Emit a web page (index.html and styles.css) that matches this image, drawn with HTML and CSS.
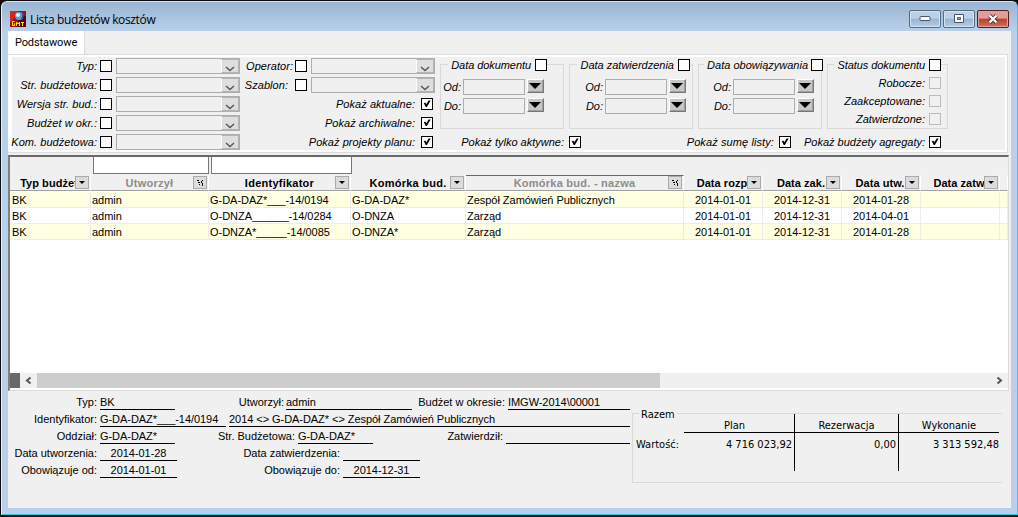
FILE: index.html
```html
<!DOCTYPE html>
<html lang="pl">
<head>
  <meta charset="UTF-8">
  <title>Lista budżetów kosztów</title>
  <link rel="stylesheet" href="styles.css">
</head>
<body>
  <svg class="defs" width="0" height="0">
    <symbol id="check" viewBox="0 0 12 12"><path d="M2.700 5 4.500 4.800 5.300 6.300 7.600 2.600 9.600 2.600 5.900 9 4.700 9Z"/></symbol>
    <symbol id="chevron" viewBox="0 0 10 6"><path d="M1 1 5 4.500 9 1" fill="none" stroke="#555" stroke-width="1.4"/></symbol>
    <symbol id="down" viewBox="0 0 12 6"><path d="M0 0h12L6 6z"/></symbol>
    <symbol id="small" viewBox="0 0 6 3"><path d="M0 0h6L3 3z"/></symbol>
    <symbol id="sort" viewBox="0 0 7 6"><path d="M0 0h2v1h-2zM1 2h2v1h-2zM2 4h1v1h-1zM5 0h1v1h-1zM4 1h1v2h-1zM5 3h1v3h-1z"/></symbol>
  </svg>

  <div class="window">
    <div class="titlebar">
      <svg class="logo" width="16" height="16" viewBox="0 0 16 16">
        <rect width="16" height="16" fill="#a80c0c"/>
        <path d="M0 0h8L2 11H0z" fill="#d32a20"/>
        <path d="M10 5h6v11H6z" fill="#5c0505"/>
        <circle cx="9" cy="5" r="4" fill="#5b9fd0"/>
        <circle cx="8" cy="4" r="2" fill="#d9f1fb"/>
        <path d="M12 1l2 2-1 5-2 1 1-4z" fill="#24588c"/>
        <path d="M4.500 10.500H2.500v4h2v-2M6.500 15v-4l1.500 2 1.500-2v4M11 11.500h3M12.500 11.500V15" fill="none" stroke="#ffe800"/>
      </svg>
      <h1>Lista budżetów kosztów</h1>
      <div class="controls">
        <button class="control"><svg width="12" height="6"><rect x="1" y=".5" width="10" height="4" rx="1" fill="#fff" stroke="#4a5468"/></svg></button>
        <button class="control"><svg width="12" height="10"><path d="M1.500.500h9v8h-9z" fill="#fff" stroke="#4a5468"/><path d="M4.500 3.500h3v2h-3z" fill="#9ab4d0" stroke="#4a5468"/></svg></button>
        <button class="control close"><svg width="12" height="10"><path d="M2.500 1.500l7 7M9.500 1.500l-7 7" stroke="#4a3848" stroke-width="4"/><path d="M2.500 1.500l7 7M9.500 1.500l-7 7" stroke="#fff" stroke-width="2.200"/></svg></button>
      </div>
    </div>

    <div class="content">
      <div class="tabs"><div class="tab">Podstawowe</div></div>

      <div class="filters">
        <div class="col-a">
          <div class="row"><label>Typ:</label><i class="cb"></i><div class="select"><span><svg><use href="#chevron"/></svg></span></div></div>
          <div class="row"><label>Str. budżetowa:</label><i class="cb"></i><div class="select"><span><svg><use href="#chevron"/></svg></span></div></div>
          <div class="row"><label>Wersja str. bud.:</label><i class="cb"></i><div class="select"><span><svg><use href="#chevron"/></svg></span></div></div>
          <div class="row"><label>Budżet w okr.:</label><i class="cb"></i><div class="select"><span><svg><use href="#chevron"/></svg></span></div></div>
          <div class="row"><label>Kom. budżetowa:</label><i class="cb"></i><div class="select"><span><svg><use href="#chevron"/></svg></span></div></div>
        </div>

        <div class="col-b">
          <div class="row"><label>Operator:</label><i class="cb"></i><div class="select"><span><svg><use href="#chevron"/></svg></span></div></div>
          <div class="row"><label class="szablon">Szablon:</label><i class="cb"></i><div class="select"><span><svg><use href="#chevron"/></svg></span></div></div>
          <div class="row check"><label>Pokaż aktualne:</label><i class="cb"><svg><use href="#check"/></svg></i></div>
          <div class="row check"><label>Pokaż archiwalne:</label><i class="cb"><svg><use href="#check"/></svg></i></div>
          <div class="row check"><label>Pokaż projekty planu:</label><i class="cb"><svg><use href="#check"/></svg></i></div>
        </div>

        <div class="col-c">
          <div class="groups">
            <div class="group dokument">
              <div class="legend"><label>Data dokumentu</label><i class="cb"></i></div>
              <div class="date"><label>Od:</label><span class="input"></span><button><svg><use href="#down"/></svg></button></div>
              <div class="date"><label>Do:</label><span class="input"></span><button><svg><use href="#down"/></svg></button></div>
            </div>
            <div class="group zatwierdzenie">
              <div class="legend"><label>Data zatwierdzenia</label><i class="cb"></i></div>
              <div class="date"><label>Od:</label><span class="input"></span><button><svg><use href="#down"/></svg></button></div>
              <div class="date"><label>Do:</label><span class="input"></span><button><svg><use href="#down"/></svg></button></div>
            </div>
            <div class="group obowiazywanie">
              <div class="legend"><label>Data obowiązywania</label><i class="cb"></i></div>
              <div class="date"><label>Od:</label><span class="input"></span><button><svg><use href="#down"/></svg></button></div>
              <div class="date"><label>Do:</label><span class="input"></span><button><svg><use href="#down"/></svg></button></div>
            </div>
            <div class="group status">
              <div class="legend"><label>Status dokumentu</label><i class="cb"></i></div>
              <div class="state"><label>Robocze:</label><i class="cb off"></i></div>
              <div class="state"><label>Zaakceptowane:</label><i class="cb off"></i></div>
              <div class="state"><label>Zatwierdzone:</label><i class="cb off"></i></div>
            </div>
          </div>
          <div class="options">
            <label class="aktywne">Pokaż tylko aktywne:</label><i class="cb"><svg><use href="#check"/></svg></i>
            <label class="suma">Pokaż sumę listy:</label><i class="cb"><svg><use href="#check"/></svg></i>
            <label class="agregaty">Pokaż budżety agregaty:</label><i class="cb"><svg><use href="#check"/></svg></i>
          </div>
        </div>
      </div>

      <div class="list">
        <div class="search"><span></span><span></span></div>
        <div class="tr head">
          <div><b class="cut">Typ budżet</b><i><svg><use href="#small"/></svg></i></div>
          <div class="dim"><b>Utworzył</b><i><svg class="sort"><use href="#sort"/></svg></i></div>
          <div><b>Identyfikator</b><i><svg><use href="#small"/></svg></i></div>
          <div><b>Komórka bud.</b><i><svg><use href="#small"/></svg></i></div>
          <div class="dim pressed"><b>Komórka bud. - nazwa</b><i><svg class="sort"><use href="#sort"/></svg></i></div>
          <div><b class="cut">Data rozp</b><i><svg><use href="#small"/></svg></i></div>
          <div><b class="cut">Data zak.</b><i><svg><use href="#small"/></svg></i></div>
          <div><b class="cut">Data utw.</b><i><svg><use href="#small"/></svg></i></div>
          <div><b class="cut">Data zatw</b><i><svg><use href="#small"/></svg></i></div>
          <div></div>
        </div>
        <div class="tr odd">
          <div>BK</div><div>admin</div><div>G-DA-DAZ*___-14/0194</div><div>G-DA-DAZ*</div><div>Zespół Zamówień Publicznych</div>
          <div class="d">2014-01-01</div><div class="d">2014-12-31</div><div class="d">2014-01-28</div><div></div><div></div>
        </div>
        <div class="tr">
          <div>BK</div><div>admin</div><div>O-DNZA______-14/0284</div><div>O-DNZA</div><div>Zarząd</div>
          <div class="d">2014-01-01</div><div class="d">2014-12-31</div><div class="d">2014-04-01</div><div></div><div></div>
        </div>
        <div class="tr odd">
          <div>BK</div><div>admin</div><div>O-DNZA*_____-14/0085</div><div>O-DNZA*</div><div>Zarząd</div>
          <div class="d">2014-01-01</div><div class="d">2014-12-31</div><div class="d">2014-01-28</div><div></div><div></div>
        </div>
        <div class="empty"></div>
        <div class="scrollbar">
          <span class="split"></span>
          <svg width="17" height="15"><path d="M10.500 4.500 7 7.500l3.500 3" fill="none" stroke="#555" stroke-width="2"/></svg>
          <span class="thumb"></span>
          <svg class="right" width="17" height="15"><path d="M6.500 4.500 10 7.500 6.500 10.500" fill="none" stroke="#555" stroke-width="2"/></svg>
        </div>
      </div>

      <div class="details">
        <div class="fields">
          <div class="line"><label class="l1">Typ:</label><span class="w75">BK</span><label class="utworzyl">Utworzył:</label><span class="w126">admin</span><label class="okres">Budżet w okresie:</label><span class="rest">IMGW-2014\00001</span></div>
          <div class="line"><label class="l1">Identyfikator:</label><span class="w126">G-DA-DAZ*___-14/0194</span><span class="opis rest">2014 &lt;&gt; G-DA-DAZ* &lt;&gt; Zespół Zamówień Publicznych</span></div>
          <div class="line"><label class="l1">Oddział:</label><span class="w75">G-DA-DAZ*</span><label class="str">Str. Budżetowa:</label><span class="w75">G-DA-DAZ*</span><label class="zatwierdzil">Zatwierdził:</label><span class="rest"></span></div>
          <div class="line"><label class="l1">Data utworzenia:</label><span class="w77">2014-01-28</span><label class="do">Data zatwierdzenia:</label><span class="w77"></span></div>
          <div class="line"><label class="l1">Obowiązuje od:</label><span class="w77">2014-01-01</span><label class="do">Obowiązuje do:</label><span class="w77">2014-12-31</span></div>
        </div>
        <div class="total">
          <div class="total-title"><span>Razem</span></div>
          <div class="sums">
            <div></div><div class="th">Plan</div><div class="th">Rezerwacja</div><div class="th">Wykonanie</div>
            <div class="wartosc">Wartość:</div><div class="num">4 716 023,92</div><div class="num">0,00</div><div class="num">3 313 592,48</div>
          </div>
        </div>
      </div>
    </div>
  </div>
</body>
</html>
```
FILE: styles.css
```css
* {
  margin: 0;
  padding: 0;
  box-sizing: border-box;
}

body {
  width: 1018px;
  height: 517px;
  overflow: hidden;
  background: #0b0b10;
  font-family: "Liberation Sans", Arial, sans-serif;
  font-size: 11px;
  color: #000;
}

.defs {
  display: block;
}

svg {
  display: block;
}

label {
  white-space: nowrap;
  text-align: right;
}

.window {
  height: 514px;
  margin: 1px 0 0 1px;
  padding: 0 6px 6px;
  border: 1px solid #35cbe8;
  border-top-color: #d5e4f2;
  border-left-color: #e8f4fb;
  border-radius: 6px 6px 0 0;
  background: linear-gradient(#9ab5d3, #b9d1ea 30px, #b9cfea);
}

.titlebar {
  display: flex;
  align-items: center;
  height: 29px;
  padding-left: 2px;
}

.logo {
  margin-top: 5px;
}

h1 {
  margin: 6px 0 0 4px;
  font: 12px/17px "Open Sans", sans-serif;
  letter-spacing: -0.35px;
}

.controls {
  display: flex;
  gap: 2px;
  margin: 5px 2px 0 auto;
}

.control {
  display: flex;
  align-items: center;
  justify-content: center;
  width: 32px;
  height: 18px;
  border: 1px solid #546b87;
  border-radius: 2px;
  box-shadow: inset 0 0 0 1px #d4e3f2;
  background: linear-gradient(#bed0e4 45%, #98b4d2 50%, #b5cee8);
}

.control.close {
  border-color: #551c26;
  box-shadow: inset 0 0 0 1px #e0a39c;
  background: linear-gradient(#e39d92 45%, #bd3e2c 50%, #d07158);
}

.content {
  height: 477px;
  background: #f0f0f0;
}

.tabs {
  height: 23px;
}

.tab {
  width: 77px;
  height: 23px;
  border-right: 1px solid #d9d9d9;
  background: #fff;
  font: 11px/23px Roboto, sans-serif;
  letter-spacing: -0.1px;
  text-align: center;
}

/* filter panel */
.filters {
  display: flex;
  width: 1000px;
  height: 99px;
  padding: 1px 2px 0 3px;
  border: 1px solid #dcdcdc;
  border-left: 0;
  box-shadow: inset 0 0 0 2px #fff, inset 4px 0 #fff;
  font-style: italic;
}

.row {
  display: flex;
  align-items: center;
  height: 19px;
}

.cb {
  flex: none;
  width: 12px;
  height: 12px;
  border: 1px solid #000;
  background: #fff;
}

.cb svg {
  width: 12px;
  height: 12px;
  margin: -1px;
}

.cb.off {
  border-color: #bcbcbc;
  background: #f0f0f0;
}

.select {
  display: flex;
  justify-content: flex-end;
  width: 124px;
  height: 16px;
  margin-left: 4px;
  border: 1px solid #adadb2;
}

.select span {
  width: 18px;
  padding: 6px 0 0 3px;
  border: 1px solid #b4b4b4;
  border-left-color: #fff;
  background: #dedede;
}

.select svg {
  width: 10px;
  height: 6px;
}

.col-a {
  width: 230px;
}

.col-a label {
  width: 86px;
  margin-right: 3px;
  letter-spacing: 0.05px;
}

.col-b {
  width: 199px;
}

.col-b label {
  width: 52px;
  margin-right: 2px;
  letter-spacing: 0.05px;
}

.col-b .szablon {
  padding-right: 5px;
}

.col-b .check label {
  width: 174px;
  margin-right: 6px;
}

.col-c {
  width: 510px;
}

.groups {
  display: flex;
  gap: 5px;
  padding-top: 8px;
}

.group {
  width: 124px;
  height: 65px;
  border: 1px solid #d9d9d9;
}

.group.status {
  width: 121px;
}

.legend {
  display: flex;
  align-items: center;
  justify-content: flex-end;
  height: 12px;
  margin-top: -6px;
  margin-right: 16px;
}

.legend label {
  padding: 0 4px 0 3px;
  background: #f0f0f0;
}

.dokument .legend label,
.status .legend label {
  letter-spacing: -0.07px;
}

.zatwierdzenie .legend {
  margin-right: 2px;
}

.obowiazywanie .legend {
  margin-right: -2px;
}

.obowiazywanie .legend label {
  padding-right: 3px;
}

.status .legend {
  margin-right: 6px;
}

.date {
  display: flex;
  height: 19px;
  line-height: 17px;
}

.legend + .date {
  margin-top: 8px;
}

.date label {
  width: 20px;
  margin-right: 2px;
}

.zatwierdzenie .date label {
  width: 33px;
}

.obowiazywanie .date label {
  width: 32px;
}

.input {
  width: 62px;
  height: 16px;
  border: 1px solid #adadb2;
}

.date button {
  display: flex;
  width: 17px;
  height: 14px;
  margin-left: 2px;
  padding: 3px 0 0 1px;
  border: 1px solid #fff;
  border-right-color: #777;
  border-bottom-color: #777;
  box-shadow: inset -1px -1px #a0a0a0;
  background: #c6c6c6;
}

.date svg {
  width: 12px;
  height: 6px;
}

.state {
  display: flex;
  align-items: center;
  justify-content: flex-end;
  height: 18px;
  margin-right: 6px;
}

.legend + .state {
  margin-top: 3px;
}

.state label {
  margin-right: 4px;
}

.options {
  display: flex;
  align-items: center;
  height: 12px;
  margin-top: 7px;
}

.options .aktywne {
  width: 124px;
  margin-right: 5px;
}

.options .suma {
  width: 193px;
  margin-right: 5px;
  letter-spacing: 0.1px;
}

.options .agregaty {
  width: 134px;
  margin-right: 4px;
}

/* budget list */
.list {
  width: 1001px;
  height: 236px;
  margin-top: 2px;
  border: 1px solid #dcdcdc;
  border-top: 2px solid #696969;
  border-left: 2px solid #808080;
  background: #fff;
}

.search {
  display: flex;
  gap: 2px;
  height: 18px;
  padding-left: 83px;
  background: #f0f0f0;
}

.search span {
  width: 116px;
  height: 17px;
  border: 1px solid #777;
  border-top: 0;
  background: #fff;
}

.search span + span {
  width: 141px;
}

.tr {
  display: grid;
  grid-template-columns: 81px 118px 142px 115px 218px 79px 79px 79px 79px 8px;
  height: 16px;
  line-height: 16px;
  letter-spacing: -0.03px;
}

.tr > div {
  overflow: hidden;
  padding-left: 1px;
  border-right: 1px solid #ececec;
  border-bottom: 1px solid #ececec;
  white-space: nowrap;
}

.tr > div:first-child {
  padding-left: 2px;
}

.tr.odd > div {
  background: #ffffe1;
}

.tr .d {
  padding: 0;
  text-align: center;
}

.tr.head {
  margin-bottom: 1px;
  letter-spacing: 0.25px;
}

.head > div,
.head > div:first-child {
  display: flex;
  padding: 0;
  border-right-color: #fff;
  border-bottom: 1px solid #a0a0a0;
  background: #f0f0f0;
}

.head b {
  width: 100%;
  flex: none;
  text-align: center;
}

.head .cut {
  padding-right: 2px;
  letter-spacing: 0.05px;
}

.head i {
  display: flex;
  flex: none;
  align-items: center;
  justify-content: center;
  width: 14px;
  height: 13px;
  margin: 1px 0 0 -15px;
  border: 1px solid #aaa;
  background: #dcdcdc;
}

.head svg {
  width: 6px;
  height: 3px;
}

.head .sort {
  width: 7px;
  height: 6px;
}

.head .dim b {
  color: #8c8c8c;
}

.head .pressed {
  border-top: 1px solid #696969;
  line-height: 14px;
}

.head .pressed i {
  margin-top: 0;
}

.empty {
  height: 133px;
}

.scrollbar {
  display: flex;
  height: 15px;
  background: #f0f0f0;
}

.split {
  width: 10px;
  background: #696969;
}

.thumb {
  width: 623px;
  background: #cdcdcd;
}

.right {
  margin-left: auto;
}

/* details under the list */
.details {
  display: flex;
  padding-top: 2px;
}

.fields {
  width: 622px;
  margin-right: 2px;
}

.line {
  display: flex;
  height: 17px;
  line-height: 18px;
  white-space: nowrap;
  letter-spacing: -0.05px;
}

.line label {
  margin-right: 3px;
  letter-spacing: 0;
}

.line span {
  height: 17px;
  border-bottom: 1px solid #000;
}

.l1 {
  width: 89px;
}

.w75 {
  width: 75px;
}

.w77 {
  width: 77px;
  text-align: center;
}

.w126 {
  width: 126px;
}

.rest {
  flex: 1;
}

.line .utworzyl {
  width: 109px;
  margin-right: 2px;
}

.okres {
  width: 93px;
}

.opis {
  margin-left: 3px;
}

.str {
  width: 120px;
}

.zatwierdzil {
  width: 130px;
}

.do {
  width: 163px;
}

.total {
  width: 370px;
  height: 70px;
  margin-top: 20px;
  border: 1px solid #d9d9d9;
  border-right: 0;
  font: 11px "DejaVu Sans Condensed", "DejaVu Sans", sans-serif;
}

.total-title {
  height: 8px;
  margin-top: -6px;
  padding-left: 6px;
}

.total-title span {
  padding: 0 2px;
  background: #f0f0f0;
}

.sums {
  display: grid;
  grid-template-columns: 51px 111px 104px 100px;
  grid-template-rows: 19px 38px;
  margin-top: -2px;
}

.th {
  padding-top: 4px;
  padding-right: 9px;
  border-bottom: 1px solid #000;
  text-align: center;
  line-height: 16px;
}

.th + .th {
  padding-right: 0;
}

.sums div:nth-child(4n + 2),
.sums div:nth-child(4n + 3) {
  border-right: 1px solid #000;
}

.num {
  padding-right: 2px;
  line-height: 24px;
  text-align: right;
}

.num:last-child {
  padding-right: 0;
}

.wartosc {
  padding-left: 3px;
  line-height: 24px;
}
```
